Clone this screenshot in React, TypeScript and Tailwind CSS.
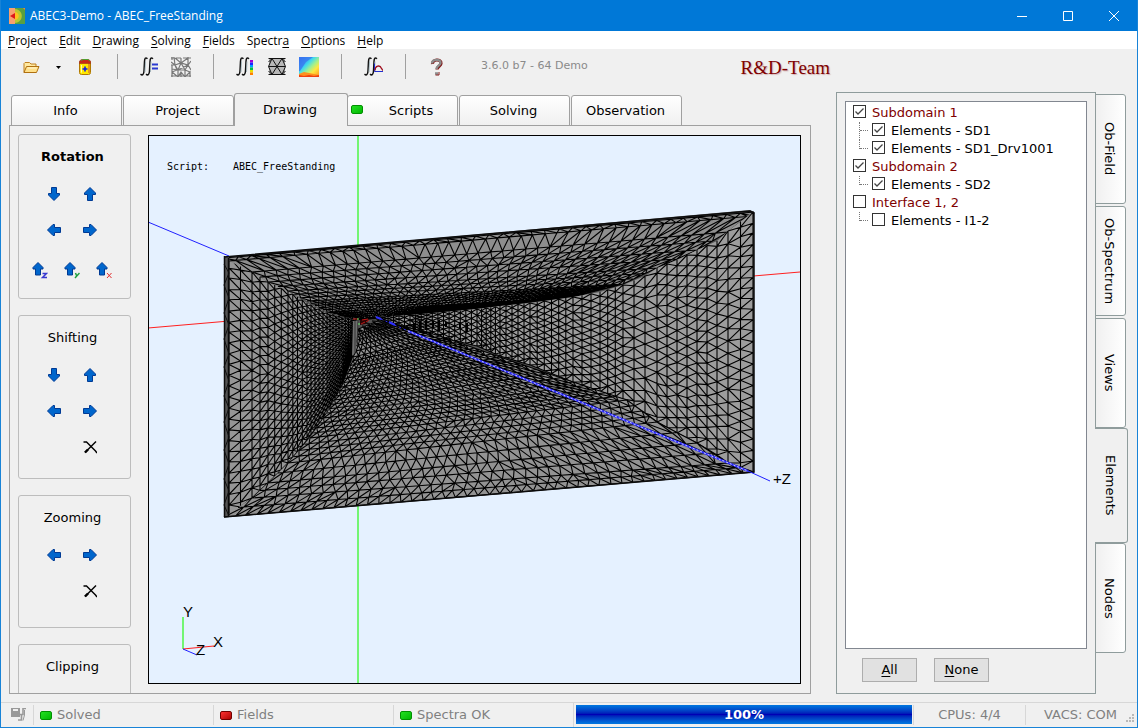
import { ReactNode, useState } from 'react';
import clsx from 'clsx';

type Point = [number, number];
// x1, y1, x2, y2, strips up to the next frame, edge length of a triangle
type Frame = [number, number, number, number, number, number];

const walls: { fill: string; frames: Frame[] }[] = [
  {
    fill: '#969696',
    frames: [
      [229, 257, 229, 516, 2, 11],
      [252, 272, 252, 498, 2, 10],
      [268, 282, 268, 483, 3, 9],
      [288, 291, 288, 463, 4, 8],
      [307, 303, 307, 440, 5, 6],
      [327, 313, 327, 413, 5, 5],
      [342, 317, 342, 387, 4, 4],
      [355, 319, 355, 350, 0, 4],
    ],
  },
  {
    fill: '#8e8e8e',
    frames: [
      [224, 258, 754, 212, 1, 14],
      [229, 261, 753, 216, 1, 12],
      [252, 272, 728, 232, 2, 12],
      [268, 282, 697, 250, 2, 11],
      [288, 291, 657, 268, 3, 10],
      [307, 301, 623, 284, 5, 8],
      [327, 312, 573, 297, 4, 6],
      [353, 319, 480, 308, 1, 5],
      [355, 320, 400, 317, 0, 5],
    ],
  },
  {
    fill: '#9d9d9d',
    frames: [
      [753, 212, 753, 472, 2, 11],
      [728, 231, 728, 463, 1, 12],
      [717, 241, 717, 455, 2, 11],
      [697, 250, 697, 443, 2, 11],
      [677, 260, 677, 433, 2, 11],
      [657, 268, 657, 422, 1, 11],
      [645, 276, 645, 413, 2, 11],
      [623, 285, 623, 399, 3, 9],
      [600, 292, 600, 392, 3, 8],
      [573, 297, 573, 382, 6, 8],
      [530, 303, 530, 365, 5, 7],
      [500, 306, 500, 356, 5, 6],
      [477, 309, 477, 346, 12, 6],
      [410, 315, 410, 330, 6, 5],
      [377, 317, 377, 320, 0, 5],
    ],
  },
  {
    fill: '#939393',
    frames: [
      [224, 517, 754, 472, 2, 11],
      [252, 498, 728, 463, 2, 12],
      [268, 483, 697, 443, 2, 11],
      [288, 463, 657, 422, 4, 11],
      [310, 438, 627, 400, 5, 9],
      [327, 413, 573, 382, 6, 8],
      [342, 387, 500, 357, 7, 7],
      [353, 357, 440, 336, 5, 6],
      [356, 330, 380, 320, 0, 5],
    ],
  },
];

function noise(i: number, j: number) {
  const n = Math.sin(i * 127.1 + j * 311.7) * 43758.5453;
  return n - Math.floor(n) - 0.5;
}

function meshRows(frames: Frame[]) {
  const rows: Point[][] = [];

  frames.forEach((frame, index) => {
    const next = frames[index + 1];
    const strips = next ? frame[4] : 1;
    const length = Math.hypot(frame[2] - frame[0], frame[3] - frame[1]);
    const count = Math.max(2, Math.round(length / frame[5]));

    for (let s = 0; s < strips; s++) {
      const t = s / strips;
      const [x1, y1, x2, y2] = frame.map((v, k) =>
        next ? v + (next[k] - v) * t : v
      );
      const r = rows.length;
      const row: Point[] = [[x1, y1]];

      for (let j = r % 2 ? 0.5 : 1; j < count; j++) {
        const p = (j + noise(r, j) * 0.12) / count;
        row.push([x1 + (x2 - x1) * p, y1 + (y2 - y1) * p]);
      }
      row.push([x2, y2]);
      rows.push(row);
    }
  });

  return rows;
}

function meshPath(frames: Frame[]) {
  const rows = meshRows(frames);
  const at = ([x, y]: Point) => `${x.toFixed(1)} ${y.toFixed(1)}`;
  let d = '';

  rows.forEach((row, index) => {
    d += `M${row.map(at).join('L')}`;

    const next = rows[index + 1];
    if (!next) return;

    // advance along whichever row lags behind, so triangles stay staggered
    const share = (points: Point[], i: number) => {
      const [x, y] = points[i];
      const [x1, y1] = points[0];
      const [x2, y2] = points[points.length - 1];
      return Math.hypot(x - x1, y - y1) / Math.hypot(x2 - x1, y2 - y1);
    };
    let a = 0;
    let b = 0;
    while (a < row.length - 1 || b < next.length - 1) {
      const shareA = a < row.length - 1 ? share(row, a + 1) : Infinity;
      const shareB = b < next.length - 1 ? share(next, b + 1) : Infinity;
      if (shareA < shareB) a++;
      else b++;
      d += `M${at(row[a])}L${at(next[b])}`;
    }
  });

  return d;
}

function outline(frames: Frame[]) {
  const start = frames.map((f) => `${f[0]},${f[1]}`);
  const end = frames.map((f) => `${f[2]},${f[3]}`).reverse();
  return [...start, ...end].join(' ');
}

const meshes = walls.map((wall) => ({
  fill: wall.fill,
  points: outline(wall.frames),
  d: meshPath(wall.frames),
}));

function Scene() {
  return (
    <svg
      viewBox="149 136 651 547"
      preserveAspectRatio="xMidYMid slice"
      className="block h-full w-full"
      role="img"
      aria-label="Horn mesh"
    >
      <path d="M358 136V684" stroke="#73f573" strokeWidth="2" />
      <path d="M148 328L800 272" stroke="#ff2020" />
      <path d="M148 222L229 256" stroke="#2020ff" />

      <polygon points="224,257 750,210 754,212 754,472 224,517" fill="#555" />
      {meshes.map((mesh) => (
        <g key={mesh.fill}>
          <polygon points={mesh.points} fill={mesh.fill} />
          <path d={mesh.d} stroke="#000" strokeWidth="1.100" fill="none" />
        </g>
      ))}

      <path d="M224 257H229V517H224Z" fill="#555" />
      <path d="M224.500 256V517M228.500 258V516" stroke="#0c0c0c" strokeWidth="1.500" />
      <path d="M224 264l5 9-5 12 5 13-5 15 5 12-5 14 5 15-5 13 5 14-5 15 5 12-5 14 5 15-5 13 5 14-5 15 5 12-5 14 5 11" stroke="#111" fill="none" />
      <path d="M224 257L750 211L754 213V472L224 517" stroke="#0c0c0c" strokeWidth="1.500" fill="none" />

      <path d="M353 321h5l-2 30-4 5z" fill="#707070" />
      <path d="M355 321v32M358 321l-1 25" stroke="#333" />
      <path d="M360 320l9-1-3 5-6 1z" fill="#2a0505" />
      <path d="M353 319h5M362 320l6-1M361 324l4-2M366 322l3-2" stroke="#c01818" />
      <path d="M357 319h2M358 324h2" stroke="#73f573" />
      <path d="M362 326l10 2 10 6 12 2M366 323l12 3 8 4M372 321l10 1 14 6" stroke="#111" strokeWidth="1.500" strokeDasharray="4 1" fill="none" />
      <path d="M414 323v7M420 321v9M426 320v10M433 321v6M439 320v11M446 322v5M460 322v7M467 323v9" stroke="#000" strokeWidth="2" />
      <path d="M376 317l5 2M389 322l6 3" stroke="#3030ff" strokeWidth="2" />
      <path d="M381 319L408 331" stroke="#3030ff" strokeDasharray="2 3" />
      <path d="M408 331L748 471" stroke="#2a2aff" strokeWidth="2" />
      <path d="M408 331L748 471" stroke="#d0d0f8" strokeWidth="1" strokeDasharray="2 2" />
      <path d="M748 471L770 481" stroke="#2020ff" strokeWidth="1" />

      <path d="M183 617V649" stroke="#73f573" strokeWidth="2" />
      <path d="M183 649L214 646" stroke="#ff2020" />
      <path d="M183 649L197 655" stroke="#2020ff" />
      <g fontFamily="'Liberation Sans', sans-serif" fontSize="15">
        <text x="183" y="617">Y</text>
        <text x="213" y="647">X</text>
        <text x="196" y="655">Z</text>
        <text x="773" y="484">+Z</text>
      </g>
      <g fontFamily="'DejaVu Sans Mono', monospace" fontSize="10">
        <text x="167" y="170">Script:</text>
        <text x="233" y="170">ABEC_FreeStanding</text>
      </g>
    </svg>
  );
}

const arrowTurns = {
  up: 'rotate-0',
  right: 'rotate-90',
  down: 'rotate-180',
  left: '-rotate-90',
};

function Arrow({ to }: { to: keyof typeof arrowTurns }) {
  return (
    <svg width="14" height="14" viewBox="0 0 14 14" className={arrowTurns[to]}>
      <path d="M7 .5L12.500 6v1.500H9.500v6h-5v-6h-3V6z" fill="#0066cc" stroke="#003a94" />
    </svg>
  );
}

function Cross() {
  return (
    <svg width="14" height="14" viewBox="0 0 14 14" stroke="#000" fill="none">
      <path d="M.5 2h3l9 9 1.500 2" strokeWidth="1.400" />
      <path d="M13 1.500L2 12.500" strokeWidth="1.400" />
      <path d="M5 9.500l-3 3" strokeWidth="2.400" />
    </svg>
  );
}

function IconButton({ label, children }: { label: string; children: ReactNode }) {
  return (
    <button type="button" aria-label={label} className="flex h-9 w-9 items-center justify-center">
      {children}
    </button>
  );
}

function ButtonRow({ className, children }: { className?: string; children: ReactNode }) {
  return <div className={clsx('flex pr-0.5', className)}>{children}</div>;
}

function AxisButton({ axis, color }: { axis: string; color: string }) {
  return (
    <button type="button" aria-label={`Rotate ${axis}`} className="flex h-9 w-8 items-center justify-center">
      <svg width="16" height="18" viewBox="0 0 16 18">
        <path d="M6 1.500L11 6.500v1.500H8.500v6h-5V8H1V6.500z" fill="#0066cc" stroke="#003a94" />
        {axis === 'z' && <path d="M10.500 12.500h4l-4 4h4.500" stroke={color} strokeWidth="1.500" fill="none" />}
        {axis === 'y' && <path d="M11.500 12l1 2.500M15.500 12l-4.500 5" stroke={color} strokeWidth="1.500" fill="none" />}
        {axis === 'x' && <path d="M11 12l4.500 5M15.500 12L11 17" stroke={color} fill="none" />}
      </svg>
    </button>
  );
}

function Group({ title, bold, className, children }: { title: string; bold?: boolean; className?: string; children?: ReactNode }) {
  return (
    <section className={clsx('flex shrink-0 flex-col items-center rounded-[3px] border border-[#bdbdbd] pt-3 pr-1', className)}>
      <h2 className={clsx('mb-[9px] leading-5', bold && 'font-bold')}>{title}</h2>
      {children}
    </section>
  );
}

function Led({ red }: { red?: boolean }) {
  return (
    <span
      className={clsx(
        'h-[9px] w-3 shrink-0 rounded-[2px] border bg-linear-to-br',
        red ? 'border-[#700000] from-[#ff3030] to-[#b00000]' : 'border-[#009000] from-[#20e020] to-[#00b800]'
      )}
    />
  );
}

function Integral() {
  return (
    <g fill="none">
      <path d="M8.500 1.800C6.500 0 5.600 1.500 5.500 4.500L5 14c-.2 3.500-1.500 4.800-3.500 3.200M14 1.800C12 0 11.100 1.500 11 4.500L10.500 14c-.2 3.500-1.500 4.800-3.500 3.200" stroke="#111" strokeWidth="1.500" />
      <path d="M6.500 4.500L6 15M12 4.500L11.500 15" stroke="#9ab0b8" strokeWidth=".8" />
    </g>
  );
}

function ToolButton({ label, children }: { label: string; children: ReactNode }) {
  return (
    <button type="button" aria-label={label} className="flex h-6 w-6 items-center justify-center">
      <svg width="20" height="20" viewBox="0 0 20 20">
        {children}
      </svg>
    </button>
  );
}

function Separator() {
  return <span className="mr-[19px] ml-5 h-[25px] w-px bg-[#a0a0a0]" />;
}

const spectrum = ['#a000d0', '#2020ff', '#00a0ff', '#00c040', '#e8e000', '#ff8000'];

function Toolbar() {
  return (
    <div className="flex h-[43px] shrink-0 items-center pb-2 pl-[18px]">
      <ToolButton label="Open">
        <path d="M3 15.500V6.500l1-1h4.500l1.500 1.500H15v2" fill="#ffe9a0" stroke="#c08020" />
        <path d="M3 15.500L5.500 9.500h12.500l-2.500 6z" fill="#ffe08a" stroke="#b07010" />
        <path d="M6.500 11h9" stroke="#fff8d8" />
      </ToolButton>
      <button type="button" aria-label="Recent projects" className="mx-1 flex h-6 w-[22px] items-center justify-center pt-0.5">
        <svg width="5" height="3" viewBox="0 0 5 3"><path d="M0 0h5L2.500 3z" /></svg>
      </button>
      <ToolButton label="Solve project">
        <rect x="4.500" y="4" width="11" height="13.500" rx="2" fill="#ffe800" stroke="#b07800" />
        <path d="M14 6v10" stroke="#e08020" strokeWidth="1.500" />
        <path d="M4.500 6.500V4l2-1.500h7l2 1.500v2.500z" fill="#c82818" stroke="#a03018" strokeWidth=".6" />
        <path d="M6 3.500L8 2.500h5l2 1.500" stroke="#50a030" fill="none" />
        <path d="M6.500 8v7.500" stroke="#fffbb0" />
        <path d="M10 9.500v5M7.500 12h5" stroke="#1020e0" strokeWidth="1.600" />
      </ToolButton>
      <Separator />
      <div className="flex gap-2">
        <ToolButton label="Solve integral">
          <Integral />
          <path d="M13 7.500h6M13 11.500h6" stroke="#2a3ad0" strokeWidth="1.800" />
        </ToolButton>
        <ToolButton label="Mesh">
          <path
            d="M0 1h3M5 1h5M12 1h8M1 0v3M0 5l4 3M3 0l1 8 6-2 7 2 3-4M17 0v8l-7-2V1M17 1l-7 5L4 1M0 8h4l2 5-5 2M4 8l3 5 10-5 3 5M7 13h7l3-5M1 8v12M7 13l3-7 4 7v7M1 15l6 5 3-5 4 5 5-5v5M0 19h20M7 13v6M14 13l5 2M10 15v5M1 12l6 1"
            stroke="#787878"
            strokeWidth="1.200"
            fill="none"
          />
        </ToolButton>
      </div>
      <Separator />
      <div className="flex gap-2">
        <ToolButton label="Field integral">
          <Integral />
          {spectrum.map((color, i) => (
            <rect key={color} x="15" y={3 + i * 2.5} width="3" height="2.500" fill={color} />
          ))}
        </ToolButton>
        <ToolButton label="Field mesh">
          <rect x="2" y="2" width="16" height="16" fill="#b8b8b8" />
          <path d="M1.500 1.500h17M1.500 9.500h17M1.500 17.500h17" stroke="#111" strokeWidth="1.200" />
          <path d="M1.500 5L5 1.500 15 17.500l3.500-3.500M1.500 14L5 17.500 15 1.500 18.500 5M5 1.500L1.500 9.500 5 17.500M15 1.500l3.500 8-3.500 8" stroke="#111" fill="none" />
        </ToolButton>
        <ToolButton label="Field map">
          <defs>
            <linearGradient id="map" x1="0" y1="0" x2="1" y2="1">
              <stop offset=".1" stopColor="#3070f0" />
              <stop offset=".38" stopColor="#40d8f0" />
              <stop offset=".55" stopColor="#a0f090" />
              <stop offset=".72" stopColor="#ffe840" />
              <stop offset="1" stopColor="#ff9018" />
            </linearGradient>
          </defs>
          <rect width="20" height="20" fill="url(#map)" />
          <path d="M0 0h14L7 5 1 14H0z" fill="#3a78f0" opacity=".8" />
          <path d="M0 17l5-2 5 1 5 1 5 1v2H0z" fill="#ff9020" />
          <path d="M0 18l5 1 5-1 5 1 5-1v2H0z" fill="#f04010" />
        </ToolButton>
      </div>
      <Separator />
      <ToolButton label="Spectrum integral">
        <Integral />
        <path d="M11.500 6.500v8H20.500" stroke="#2030d0" fill="none" />
        <path d="M12 13.500c0-5 5-6 6.500-2l1.500 2" stroke="#a01020" fill="none" strokeWidth="1.300" />
      </ToolButton>
      <Separator />
      <ToolButton label="Help">
        <path d="M5.500 7C5 2 14.500 1.500 14 6.500c-.2 2.500-4 3-4 6" stroke="#801818" strokeWidth="3.200" fill="none" />
        <path d="M5 6.500C5 2 14 1.500 13.500 6c-.2 2.500-4 3-4 6M8 16.500h3" stroke="#8c8c8c" strokeWidth="2.400" fill="none" />
        <path d="M8.500 18h3.500v-3" stroke="#801818" fill="none" />
      </ToolButton>
      <p className="ml-8 text-[11px] text-[#8a8a8a]">3.6.0 b7 - 64 Demo</p>
      <p className="ml-[153px] pt-1 font-['Liberation_Serif',serif] text-[19px] text-[#800000] text-shadow-[1px_1px_1px_#80000040]">R&amp;D-Team</p>
    </div>
  );
}

const menus = [
  ['', 'P', 'roject'],
  ['', 'E', 'dit'],
  ['', 'D', 'rawing'],
  ['', 'S', 'olving'],
  ['', 'F', 'ields'],
  ['Spectr', 'a', ''],
  ['', 'O', 'ptions'],
  ['', 'H', 'elp'],
];

const tabs = ['Info', 'Project', 'Drawing', 'Scripts', 'Solving', 'Observation'];
const sideTabs = ['Ob-Field', 'Ob-Spectrum', 'Views', 'Elements', 'Nodes'];

const tree = [
  { name: 'Subdomain 1', checked: true, items: ['Elements - SD1', 'Elements - SD1_Drv1001'] },
  { name: 'Subdomain 2', checked: true, items: ['Elements - SD2'] },
  { name: 'Interface 1, 2', checked: false, items: ['Elements - I1-2'] },
];

const allNames = tree.flatMap((node) => [node.name, ...node.items]);

function TreeCheck({ name, checked, onToggle }: { name: string; checked: boolean; onToggle: () => void }) {
  return (
    <label className="flex h-[18px] items-center gap-1.5">
      <span className="mb-[3px] grid">
        <input
          type="checkbox"
          checked={checked}
          onChange={onToggle}
          className="col-start-1 row-start-1 h-[13px] w-[13px] appearance-none border border-[#333] bg-white"
        />
        {checked && (
          <svg width="13" height="13" viewBox="0 0 13 13" className="pointer-events-none col-start-1 row-start-1">
            <path d="M2.500 6.500L5 9l5.500-5.500" stroke="#444" strokeWidth="1.300" fill="none" />
          </svg>
        )}
      </span>
      {name}
    </label>
  );
}

function App() {
  const [tab, setTab] = useState('Drawing');
  const [sideTab, setSideTab] = useState('Elements');
  const [selected, setSelected] = useState(
    tree.filter((node) => node.checked).flatMap((node) => [node.name, ...node.items])
  );

  const toggle = (name: string) =>
    setSelected((current) =>
      current.includes(name) ? current.filter((n) => n !== name) : [...current, name]
    );

  return (
    <div className="flex h-screen flex-col border border-t-0 border-[#1883d7] bg-[#f0f0f0] font-['DejaVu_Sans',sans-serif] text-[13px] text-black">
      <header className="flex h-[31px] shrink-0 items-center bg-[#0078d7] pl-2 font-['Open_Sans',sans-serif] text-xs text-white">
        <svg width="16" height="16" viewBox="0 0 16 16">
          <rect width="16" height="16" fill="#f08040" />
          <path d="M6 0h8l2 2v14H6z" fill="#58a040" />
          <path d="M6 1c9 1 9 13 0 14z" fill="#b8c830" />
          <path d="M6 4c5 1 5 7 0 8z" fill="#ffc020" />
          <path d="M0 0h6v16H0z" fill="#f8a070" />
          <path d="M1 8l5-3v6z" fill="#e01818" />
        </svg>
        <h1 className="ml-[5px] flex-1">ABEC3-Demo - ABEC_FreeStanding</h1>
        <button type="button" aria-label="Minimize" className="flex h-full w-[46px] items-center justify-center">
          <svg width="10" height="10" stroke="#fff"><path d="M0 5.500h10" /></svg>
        </button>
        <button type="button" aria-label="Maximize" className="flex h-full w-[46px] items-center justify-center">
          <svg width="10" height="10" stroke="#fff" fill="none"><path d="M.5 .5h9v9h-9z" /></svg>
        </button>
        <button type="button" aria-label="Close" className="flex h-full w-[46px] items-center justify-center">
          <svg width="10" height="10" stroke="#fff"><path d="M0 0l10 10M10 0L0 10" /></svg>
        </button>
      </header>

      <nav className="flex h-[18px] shrink-0 items-center gap-3 bg-white pt-0.5 pl-[7px] font-['Open_Sans',sans-serif] text-xs">
        {menus.map(([before, key, after]) => (
          <button key={before + key + after} type="button">
            {before}
            <span className="underline underline-offset-2">{key}</span>
            {after}
          </button>
        ))}
      </nav>

      <Toolbar />

      <div className="flex min-h-0 flex-1 pb-2 pl-2">
        <main className="flex min-w-0 flex-1 flex-col">
          <div role="tablist" className="z-10 flex h-[34px] shrink-0 items-end pl-0.5">
            {tabs.map((name) => (
              <button
                key={name}
                type="button"
                role="tab"
                aria-selected={tab === name}
                onClick={() => setTab(name)}
                className={clsx(
                  'flex items-center rounded-t-[3px] border border-[#a0a0a0]',
                  tab === name
                    ? '-mr-px -ml-px h-[33px] w-[114px] border-b-0 bg-[#f0f0f0]'
                    : 'mr-px h-[31px] w-[111px] bg-linear-to-b from-white to-[#f0f0f0]'
                )}
              >
                {name === 'Scripts' && <span className="ml-[3px] flex w-0 pb-0.5"><Led /></span>}
                <span className={clsx('flex-1 text-center', name === 'Scripts' ? 'pl-3.5' : 'pr-0.5')}>{name}</span>
              </button>
            ))}
          </div>

          <div className="-mt-px flex min-h-0 flex-1 gap-[17px] overflow-hidden border border-[#a0a0a0] pr-[9px] pl-2">
            <aside className="flex w-[113px] shrink-0 flex-col gap-4 overflow-hidden pt-2">
              <Group title="Rotation" bold className="pb-2.5">
                <ButtonRow>
                  <IconButton label="Rotate down"><Arrow to="down" /></IconButton>
                  <IconButton label="Rotate up"><Arrow to="up" /></IconButton>
                </ButtonRow>
                <ButtonRow>
                  <IconButton label="Rotate left"><Arrow to="left" /></IconButton>
                  <IconButton label="Rotate right"><Arrow to="right" /></IconButton>
                </ButtonRow>
                <ButtonRow className="mt-1">
                  <AxisButton axis="z" color="#3838d0" />
                  <AxisButton axis="y" color="#20a040" />
                  <AxisButton axis="x" color="#e03030" />
                </ButtonRow>
              </Group>
              <Group title="Shifting" className="pb-[13px]">
                <ButtonRow>
                  <IconButton label="Shift down"><Arrow to="down" /></IconButton>
                  <IconButton label="Shift up"><Arrow to="up" /></IconButton>
                </ButtonRow>
                <ButtonRow>
                  <IconButton label="Shift left"><Arrow to="left" /></IconButton>
                  <IconButton label="Shift right"><Arrow to="right" /></IconButton>
                </ButtonRow>
                <ButtonRow className="pl-9">
                  <IconButton label="Reset shift"><Cross /></IconButton>
                </ButtonRow>
              </Group>
              <Group title="Zooming" className="pb-[18px]">
                <ButtonRow>
                  <IconButton label="Zoom out"><Arrow to="left" /></IconButton>
                  <IconButton label="Zoom in"><Arrow to="right" /></IconButton>
                </ButtonRow>
                <ButtonRow className="pl-9">
                  <IconButton label="Reset zoom"><Cross /></IconButton>
                </ButtonRow>
              </Group>
              <Group title="Clipping" className="pb-5">
                <ButtonRow>
                  <IconButton label="Clip out"><Arrow to="left" /></IconButton>
                  <IconButton label="Clip in"><Arrow to="right" /></IconButton>
                </ButtonRow>
              </Group>
            </aside>
            <div className="my-[9px] min-w-0 flex-1 overflow-hidden border border-black bg-[#e5f1ff]">
              <Scene />
            </div>
          </div>
        </main>

        <section className="ml-[25px] flex w-[260px] shrink-0 flex-col border border-[#8f9c9c] p-2">
          <ul className="flex-1 border border-[#828790] bg-white py-0.5 pl-[7px]">
            {tree.map((node) => (
              <li key={node.name}>
                <div className="text-[#800000]">
                  <TreeCheck name={node.name} checked={selected.includes(node.name)} onToggle={() => toggle(node.name)} />
                </div>
                <ul className="pl-1.5">
                  {node.items.map((item, i) => (
                    <li key={item} className="flex">
                      <span className={clsx('w-px border-l border-dotted border-[#777]', i === node.items.length - 1 ? 'h-[9px]' : 'h-[18px]')} />
                      <span className="mr-1 h-[9px] w-2 border-b border-dotted border-[#777]" />
                      <TreeCheck name={item} checked={selected.includes(item)} onToggle={() => toggle(item)} />
                    </li>
                  ))}
                </ul>
              </li>
            ))}
          </ul>
          <div className="flex h-9 items-end gap-[17px] pb-[3px] pl-[17px]">
            <button type="button" onClick={() => setSelected(allNames)} className="h-6 w-[55px] border border-[#adadad] bg-[#e1e1e1]">
              <span className="underline underline-offset-2">A</span>ll
            </button>
            <button type="button" onClick={() => setSelected([])} className="h-6 w-[55px] border border-[#adadad] bg-[#e1e1e1]">
              <span className="underline underline-offset-2">N</span>one
            </button>
          </div>
        </section>

        <div role="tablist" aria-orientation="vertical" className="-ml-px flex w-[42px] shrink-0 flex-col items-start pt-0.5">
          {sideTabs.map((name) => (
            <button
              key={name}
              type="button"
              role="tab"
              aria-selected={sideTab === name}
              onClick={() => setSideTab(name)}
              className={clsx(
                'flex items-center justify-center rounded-r-[3px] border border-[#8f9c9c] pr-0.5 [writing-mode:vertical-rl]',
                sideTab === name
                  ? '-mt-0.5 h-[115px] w-[33px] border-l-0 bg-[#f0f0f0]'
                  : 'mb-0.5 h-[110px] w-[31px] bg-linear-to-r from-[#f0f0f0] to-white'
              )}
            >
              {name}
            </button>
          ))}
        </div>
      </div>

      <footer className="flex h-[25px] shrink-0 border-t border-[#d7d7d7] text-[#808080]">
        <div className="flex w-8 items-center justify-center pl-1">
          <svg width="16" height="14" viewBox="0 0 16 14">
            <path d="M0 0h9v9H0z" fill="#999" />
            <path d="M2 1h5v2H2z" fill="#eee" />
            <path d="M15 .5h-3v6H6M10.500 6v6H7" stroke="#999" strokeWidth="1.600" fill="none" />
            <path d="M13.500 2v5l-1.500 5.500" stroke="#999" fill="none" />
          </svg>
        </div>
        <div className="my-0.5 flex w-[180px] items-center gap-[5px] border-l border-[#d7d7d7] pl-1.5"><Led />Solved</div>
        <div className="my-0.5 flex w-[180px] items-center gap-[5px] border-l border-[#d7d7d7] pl-1.5"><Led red />Fields</div>
        <div className="my-0.5 flex w-[180px] items-center gap-[5px] border-l border-[#d7d7d7] pl-1.5"><Led />Spectra OK</div>
        <div className="flex flex-1 border-l border-[#d7d7d7] p-0.5 pr-px">
          <div role="progressbar" aria-label="Progress" aria-valuenow={100} className="flex h-[19px] flex-1 items-center justify-center bg-linear-to-b from-[#0078e0] via-[#0000b4] to-[#0078e0] font-bold text-white">
            100%
          </div>
        </div>
        <div className="my-0.5 flex w-[112px] items-center justify-center border-l border-[#d7d7d7]">CPUs: 4/4</div>
        <div className="my-0.5 flex w-[112px] items-center justify-end border-l border-[#d7d7d7]">
          VACS: COM
          <svg width="20" height="20" viewBox="0 0 20 20" fill="#b8b8b8">
            <path d="M15 9h2v2h-2zM12 12h2v2h-2zM15 12h2v2h-2zM9 15h2v2H9zM12 15h2v2h-2zM15 15h2v2h-2z" />
          </svg>
        </div>
      </footer>
    </div>
  );
}

export default App;
